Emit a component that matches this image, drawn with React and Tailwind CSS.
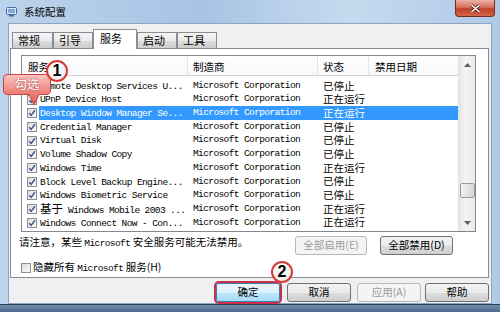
import React from "react";

const CJK = { fontFamily: '"Noto Sans CJK SC", "Noto Sans", sans-serif' };
const MONO = { fontFamily: '"Liberation Mono", "Noto Sans CJK SC", monospace' };

const rows = [
  ["Remote Desktop Services U...", "已停止"],
  ["UPnP Device Host", "正在运行"],
  ["Desktop Window Manager Se...", "正在运行", true],
  ["Credential Manager", "已停止"],
  ["Virtual Disk", "已停止"],
  ["Volume Shadow Copy", "已停止"],
  ["Windows Time", "正在运行"],
  ["Block Level Backup Engine...", "已停止"],
  ["Windows Biometric Service", "已停止"],
  ["基于 Windows Mobile 2003 ...", "正在运行"],
  ["Windows Connect Now - Con...", "正在运行"],
];

function Check({ checked }) {
  return (
    <div className="w-[10px] h-[10px] border border-[#8e8f8f] bg-[linear-gradient(135deg,#dcdcdc,#fbfbfb)] flex items-center justify-center shrink-0">
      {checked && (
        <svg width="8" height="8" viewBox="0 0 8 8">
          <path d="M1.2 4.2 L3.2 6.4 L6.9 1.3" fill="none" stroke="#3d5592" strokeWidth="1.5" />
        </svg>
      )}
    </div>
  );
}

function ServiceName({ text }) {
  if (text.startsWith("基于")) {
    return (
      <span className="whitespace-pre">
        <span style={CJK} className="text-[11.5px] tracking-normal">基于</span>
        <span style={MONO}>{text.slice(2)}</span>
      </span>
    );
  }
  return <span style={MONO} className="whitespace-pre">{text}</span>;
}

function Button({ children, disabled, primary, className = "" }) {
  let cls =
    "h-[19px] w-[64px] rounded-[3px] border flex items-center justify-center text-[10.5px] leading-none shrink-0 ";
  if (disabled) cls += "border-[#b4b8bc] bg-[#f4f4f4] text-[#9a9a9a] ";
  else if (primary)
    cls += "border-[#3c7fb1] bg-[linear-gradient(#eaf6fd,#d9f0fc_50%,#bee6fd_51%,#a7d9f5)] text-black ";
  else cls += "border-[#707070] bg-[linear-gradient(#f2f2f2,#ebebeb_50%,#dddddd_51%,#cfcfcf)] text-black ";
  return (
    <div className={cls + className} style={CJK}>
      {children}
    </div>
  );
}

export default function App() {
  return (
    <div
      className="relative w-[500px] h-[312px] overflow-hidden flex flex-col bg-[linear-gradient(90deg,#bcd3ec,#a7c4e4_40%,#c6daef_70%,#afc9e7)]"
      style={CJK}
    >
      {/* Title bar */}
      <div className="h-[23px] flex items-start shrink-0">
        <svg className="mt-[7px] ml-[6px]" width="11" height="10" viewBox="0 0 11 10">
          <rect x="0.5" y="0.5" width="10" height="7" rx="1" fill="#d8e6f4" stroke="#3e6da3" />
          <rect x="2" y="2" width="7" height="4" fill="#7fa8d6" />
          <rect x="3" y="8" width="5" height="1.5" fill="#3e6da3" />
        </svg>
        <span className="ml-[7px] mt-[5px] text-[10.5px] leading-[14px] text-black">系统配置</span>
        <div className="ml-auto mr-[5px] w-[40px] h-[17px] rounded-b-[4px] border border-t-0 border-[#7a2b20] bg-[linear-gradient(#eab3a6,#d7715c_45%,#c2402a_55%,#d5644a)] flex items-center justify-center">
          <svg width="11" height="9" viewBox="0 0 11 9">
            <path d="M1.5 1 L9.5 8 M9.5 1 L1.5 8" stroke="#5a1c14" strokeWidth="3" />
            <path d="M1.5 1 L9.5 8 M9.5 1 L1.5 8" stroke="#ffffff" strokeWidth="1.6" />
          </svg>
        </div>
      </div>

      {/* Client area */}
      <div className="mx-[8px] flex-1 bg-[#f0f0f0] border border-[#8da5c3] flex flex-col">
        {/* Tabs */}
        <div className="h-[24px] flex items-end pl-[3px] shrink-0">
          {[
            ["常规", 41],
            ["引导", 40],
            ["服务", 44, true],
            ["启动", 40],
            ["工具", 40],
          ].map(([t, w, sel]) =>
            sel ? (
              <div
                key={t}
                className="relative z-10 h-[20px] -mb-[1px] border border-b-0 border-[#898c95] bg-white text-[11px] leading-[14px] pl-[6px] pt-[1px] text-black"
                style={{ width: w }}
              >
                {t}
              </div>
            ) : (
              <div
                key={t}
                className="h-[16px] border border-b-0 border-[#898c95] bg-[linear-gradient(#f3f3f3,#ebebeb_50%,#dddddd_51%,#cdcdcd)] text-[11px] leading-[14px] pl-[5px] text-black"
                style={{ width: w }}
              >
                {t}
              </div>
            )
          )}
        </div>

        {/* Panel */}
        <div className="ml-[1px] mr-[2px] h-[230px] border border-[#898c95] bg-white flex flex-col shrink-0">
          {/* List box */}
          <div className="ml-[10px] mt-[6px] w-[455px] h-[177px] border border-[#828790] bg-white flex shrink-0">
            <div className="flex-1 flex flex-col overflow-hidden">
              {/* header */}
              <div className="h-[20px] flex border-b border-[#d5d5d5] bg-[linear-gradient(#ffffff,#f7f8fa)] text-[10.5px] text-black shrink-0">
                <div className="w-[166px] pl-[6px] pt-[3px] border-r border-[#e3e5e8]">服务</div>
                <div className="w-[130px] pl-[5px] pt-[3px] border-r border-[#e3e5e8]">制造商</div>
                <div className="w-[51px] pl-[5px] pt-[3px] border-r border-[#e3e5e8]">状态</div>
                <div className="flex-1 pl-[6px] pt-[3px]">禁用日期</div>
              </div>
              {/* rows */}
              <div className="pt-[3px] flex flex-col">
                {rows.map(([name, status, sel]) => (
                  <div key={name} className="h-[13.7px] flex items-center">
                    <div className="w-[17px] pl-[5px] flex items-center shrink-0">
                      <Check checked />
                    </div>
                    <div
                      className={
                        "flex-1 h-full flex items-center text-[9.5px] tracking-[-0.6px] " +
                        (sel ? "bg-[#3399ff] text-white" : "text-black")
                      }
                    >
                      <div className="w-[149px] pl-[1px] shrink-0 overflow-hidden">
                        <ServiceName text={name} />
                      </div>
                      <div className="w-[130px] pl-[5px] shrink-0 whitespace-pre" style={MONO}>
                        Microsoft Corporation
                      </div>
                      <div className="pl-[5px] text-[10.5px] tracking-normal leading-none" style={CJK}>
                        {status}
                      </div>
                    </div>
                  </div>
                ))}
              </div>
            </div>
            {/* scrollbar */}
            <div className="w-[17px] bg-[linear-gradient(90deg,#e6e6e6,#f4f4f4_40%,#ececec)] border-l border-[#e0e0e0] flex flex-col items-center shrink-0">
              <div className="h-[17px] flex items-center justify-center">
                <svg width="7" height="4" viewBox="0 0 7 4">
                  <path d="M0 4 L3.5 0 L7 4 Z" fill="#606060" />
                </svg>
              </div>
              <div className="flex-1" />
              <div className="w-[15px] h-[15px] mb-[16px] rounded-[2px] border border-[#9a9a9a] bg-[linear-gradient(90deg,#f3f3f3,#e4e4e4_50%,#d6d6d6)]" />
              <div className="h-[17px] flex items-center justify-center">
                <svg width="7" height="4" viewBox="0 0 7 4">
                  <path d="M0 0 L3.5 4 L7 0 Z" fill="#606060" />
                </svg>
              </div>
            </div>
          </div>

          {/* Note + buttons */}
          <div className="mt-[4px] h-[19px] flex items-start pl-[8px] pr-[35px] shrink-0">
            <div className="text-[10.5px] leading-[14px] text-black whitespace-pre mt-[-1px]">
              请注意，某些 <span style={MONO} className="text-[9.5px] tracking-[-0.6px]">Microsoft</span> 安全服务可能无法禁用。
            </div>
            <div className="ml-auto flex gap-[13px]">
              <Button disabled className="w-[72px]">全部启用(E)</Button>
              <Button className="w-[73px]">全部禁用(D)</Button>
            </div>
          </div>

          {/* hide checkbox */}
          <div className="mt-[6px] flex items-center pl-[10px] gap-[2px] shrink-0">
            <Check />
            <span className="text-[10.5px] leading-[12px] text-black whitespace-pre">
              隐藏所有 <span style={MONO} className="text-[9.5px] tracking-[-0.6px]">Microsoft</span> 服务(H)
            </span>
          </div>
        </div>

        {/* Bottom buttons */}
        <div className="mt-[5px] flex justify-end pr-[2px] shrink-0">
          <Button primary className="ring-2 ring-[#c9304a] ring-offset-0">确定</Button>
          <Button className="ml-[7px]">取消</Button>
          <Button disabled className="ml-[6px]">应用(A)</Button>
          <Button className="ml-[4px]">帮助</Button>
        </div>
      </div>

      {/* bottom frame */}
      <div className="h-[8px] shrink-0 border-t border-[#2d3d52] bg-[linear-gradient(#6e8db2,#4d6a8e)]" />

      {/* Annotation: callout 勾选 */}
      <div className="absolute left-[3px] top-[74px] w-[48px] h-[33px]">
        <svg className="absolute inset-0" width="48" height="33" viewBox="0 0 48 33">
          <defs>
            <linearGradient id="cg" x1="0" y1="0" x2="0" y2="1">
              <stop offset="0" stopColor="#fbc6c2" />
              <stop offset="0.5" stopColor="#f08c86" />
              <stop offset="1" stopColor="#e2534e" />
            </linearGradient>
          </defs>
          <path
            d="M5 0.5 H43 Q47.5 0.5 47.5 5 V16 Q47.5 20.5 43 20.5 H36 L31 31 L26 20.5 H5 Q0.5 20.5 0.5 16 V5 Q0.5 0.5 5 0.5 Z"
            fill="url(#cg)"
            stroke="#c8433e"
          />
        </svg>
        <div className="relative h-[21px] flex items-center justify-center text-[12.5px] text-white [text-shadow:0_0_2px_#a0302c]">
          勾选
        </div>
      </div>

      {/* Annotation circles */}
      <div className="absolute left-[46px] top-[60px] w-[22px] h-[22px] rounded-full border-2 border-[#d83a34] bg-[radial-gradient(circle_at_40%_30%,#ffffff,#e6e6e6)] flex items-center justify-center text-[16px] font-bold text-black leading-none" style={{ fontFamily: '"Liberation Sans", sans-serif' }}>
        1
      </div>
      <div className="absolute left-[271px] top-[261px] w-[22px] h-[22px] rounded-full border-2 border-[#d83a34] bg-[radial-gradient(circle_at_40%_30%,#ffffff,#e6e6e6)] flex items-center justify-center text-[16px] font-bold text-black leading-none" style={{ fontFamily: '"Liberation Sans", sans-serif' }}>
        2
      </div>
    </div>
  );
}
